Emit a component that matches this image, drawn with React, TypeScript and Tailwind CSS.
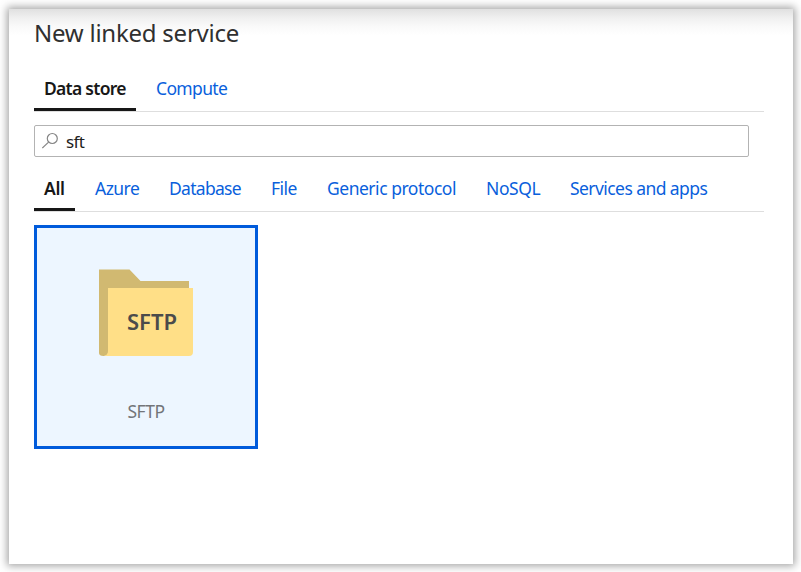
type Tab = { label: string; className: string };

const storeTabs: Tab[] = [
  { label: "Data store", className: "w-[102px] tracking-[-0.72px]" },
  { label: "Compute", className: "w-[92px] tracking-[-0.65px]" },
];

const filterTabs: Tab[] = [
  { label: "All", className: "w-[41px] tracking-[-0.3px]" },
  { label: "Azure", className: "w-[64px] tracking-[-0.55px]" },
  { label: "Database", className: "w-[92px] tracking-[-0.7px]" },
  { label: "File", className: "w-[46px] tracking-[-0.5px]" },
  { label: "Generic protocol", className: "w-[149px] tracking-[-0.48px]" },
  { label: "NoSQL", className: "w-[74px] tracking-[-0.4px]" },
  { label: "Services and apps", className: "w-[158px] tracking-[-0.57px]" },
];

function TabBar({ tabs }: { tabs: Tab[] }) {
  return (
    <nav className="flex h-[46px] w-[730px] gap-[10px] bg-[linear-gradient(#dedede,#dedede)] bg-[length:100%_1px] bg-[position:0_45px] bg-no-repeat">
      {tabs.map((tab, i) => (
        <button
          key={tab.label}
          className={`h-[45px] shrink-0 whitespace-nowrap border-b-[3px] px-[10px] pt-[2px] text-left text-[17.5px] leading-[40px] ${
            i === 0 ? "border-[#171717] font-semibold text-[#171717]" : "border-transparent font-[380] text-[#0a5fdc]"
          } ${tab.className}`}
        >
          {tab.label}
        </button>
      ))}
    </nav>
  );
}

function FolderIcon() {
  return (
    <svg width="94" height="88" viewBox="0 0 94 88" className="font-['Noto_Sans',sans-serif]">
      <path d="M0 0.500H30.500L41.500 12H90V30H9V84a4.500 3 0 0 1-9 0Z" fill="#d1b971" />
      <path d="M9 19H94V83a4 4 0 0 1-4 4H5Q9 86 9 82Z" fill="#ffdf87" />
      <text x="28" y="61" fontSize="22" fontWeight="600" textLength="50" lengthAdjust="spacingAndGlyphs" fill="#4b4b4b">
        SFTP
      </text>
    </svg>
  );
}

export default function App() {
  return (
    <div className="h-[572px] w-[801px] overflow-hidden bg-white pl-[9px] pt-[9px] font-['Noto_Sans','Open_Sans',sans-serif]">
      <main className="h-[555px] w-[784px] bg-[linear-gradient(#e0e0e0_0px,#f0f0f0_9px,#fafafa_18px,#ffffff_27px)] pl-[25px] shadow-[0_0_8px_2px_rgba(0,0,0,0.36)]">
        <h1 className="h-[57px] whitespace-nowrap pt-[8px] text-[24px] font-[370] leading-[32px] tracking-[-0.24px] text-[#303030]">
          New linked service
        </h1>
        <TabBar tabs={storeTabs} />
        <div className="mt-[13px] flex h-[32px] w-[715px] items-center rounded-[2px] border border-[#b3b3b3] bg-white pl-[7px]">
          <svg width="18" height="18" viewBox="0 0 18 18" fill="none" stroke="#858585" strokeWidth="1.200">
            <circle cx="10.300" cy="6.500" r="5" />
            <path d="M6.600 10.100 0.300 16" />
          </svg>
          <span className="ml-[6px] pt-[2px] text-[17px] font-[380] leading-[28px] tracking-[-0.6px] text-[#202020]">sft</span>
        </div>
        <div className="mt-[9px]">
          <TabBar tabs={filterTabs} />
        </div>
        <section className="mt-[13px] flex h-[224px] w-[224px] flex-col items-center border-[3px] border-[#005bdb] bg-[#edf6ff] pt-[41px]">
          <FolderIcon />
          <span className="mt-[42px] text-[17.5px] font-[370] leading-[24px] tracking-[-0.5px] text-[#737579]">SFTP</span>
        </section>
      </main>
    </div>
  );
}
